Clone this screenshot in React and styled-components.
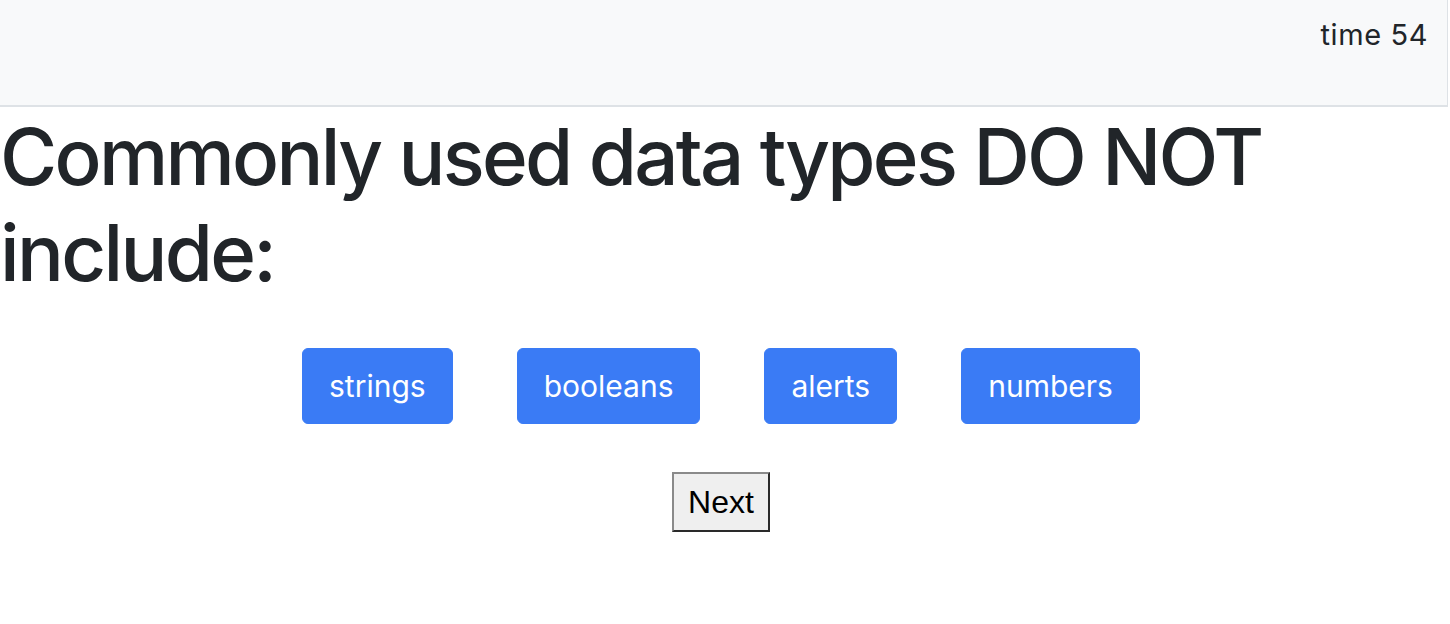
import React from "react";
import styled, { createGlobalStyle } from "styled-components";

const Global = createGlobalStyle`
  html, body { margin: 0; padding: 0; background: #fff; }
  body { font-family: Inter, "Noto Sans", sans-serif; color: #212529; }
`;

const Header = styled.header`
  box-sizing: border-box;
  width: 1448px;
  height: 107px;
  background: #f8f9fa;
  border-right: 1px solid #dee2e6;
  border-bottom: 2px solid #dee2e6;
  display: flex;
  justify-content: flex-end;
  align-items: flex-start;
  padding: 17px 19px 0 0;
`;

const Timer = styled.span`
  font-size: 29px;
  line-height: 36px;
  letter-spacing: 0.6px;
  color: #212529;
`;

const Main = styled.main`
  width: 1442px;
`;

const Question = styled.h1`
  margin: 0;
  font-size: 78px;
  font-weight: 500;
  line-height: 96px;
  letter-spacing: -2.7px;
  padding-top: 2px;
  color: #212529;
`;

const Choices = styled.div`
  display: flex;
  justify-content: center;
  gap: 64px;
  margin-top: 47px;
`;

const Choice = styled.button`
  font-family: Inter, "Noto Sans", sans-serif;
  font-size: 30px;
  line-height: 46px;
  color: #fff;
  background: #3a7bf5;
  border: 1px solid #3a7bf5;
  border-radius: 6px;
  padding: 14px 26px;
  cursor: pointer;
`;

const Footer = styled.div`
  display: flex;
  justify-content: center;
  margin-top: 48px;
`;

const NextButton = styled.button`
  font-family: "Liberation Sans", Arial, sans-serif;
  font-size: 32px;
  line-height: 36px;
  color: #000;
  background: #efefef;
  border: 2px solid;
  border-color: #8a8a8a #2a2a2a #2a2a2a #8a8a8a;
  padding: 10px 14px;
`;

const choices = ["strings", "booleans", "alerts", "numbers"];

export default function App() {
  return (
    <>
      <Global />
      <Header>
        <Timer>time 54</Timer>
      </Header>
      <Main>
        <Question>Commonly used data types DO NOT include:</Question>
        <Choices>
          {choices.map((c) => (
            <Choice key={c}>{c}</Choice>
          ))}
        </Choices>
        <Footer>
          <NextButton>Next</NextButton>
        </Footer>
      </Main>
    </>
  );
}
